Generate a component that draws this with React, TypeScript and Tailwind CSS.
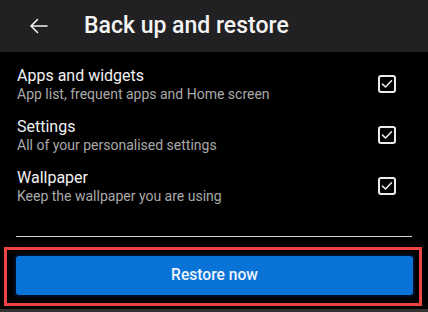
import React from "react";

const rows = [
  { title: "Apps and widgets", sub: "App list, frequent apps and Home screen" },
  { title: "Settings", sub: "All of your personalised settings" },
  { title: "Wallpaper", sub: "Keep the wallpaper you are using" },
];

function Check() {
  return (
    <div className="w-[18px] h-[18px] rounded-[3px] border-2 border-[#ececec] flex items-center justify-center">
      <svg width="12" height="10" viewBox="0 0 12 10" fill="none">
        <path d="M1.5 5.2 L4.5 8 L10.5 1.8" stroke="#ececec" strokeWidth="1.6" strokeLinecap="round" strokeLinejoin="round" />
      </svg>
    </div>
  );
}

export default function App() {
  return (
    <div className="w-[428px] h-[312px] bg-black flex flex-col overflow-hidden" style={{ fontFamily: "Roboto, 'Liberation Sans', sans-serif" }}>
      <div className="h-[52px] bg-[#212023] flex items-center shrink-0">
        <div className="ml-[29px] w-[19px] flex items-center">
          <svg width="19" height="16" viewBox="0 0 19 16" fill="none">
            <path d="M18 8 H2 M8.5 1.5 L2 8 L8.5 14.5" stroke="#f2f2f2" strokeWidth="1.6" strokeLinecap="round" strokeLinejoin="round" />
          </svg>
        </div>
        <div className="ml-[36px] text-[23px] leading-[28px] font-medium text-[#f4f4f4]">Back up and restore</div>
      </div>
      <div className="flex flex-col gap-[15px] pt-[14px] pl-[17px] pr-[32px]">
        {rows.map((r) => (
          <div key={r.title} className="flex items-center justify-between h-[36px]">
            <div className="flex flex-col">
              <div className="text-[16px] leading-[20px] text-[#f2f2f2]">{r.title}</div>
              <div className="text-[14px] leading-[16px] text-[#a9a9a9]">{r.sub}</div>
            </div>
            <Check />
          </div>
        ))}
      </div>
      <div className="mt-[32px] mx-[16px] h-px bg-[#d6d6d6]" />
      <div className="relative mt-[19px] ml-[16px] mr-[15px]">
        <div className="h-[39px] rounded-[3px] bg-[#0a73d7] shadow-[0_0_3px_2px_rgba(0,25,70,0.7)] flex items-center justify-center text-[15.6px] font-medium text-[#eef4fb]">
          Restore now
        </div>
        <div className="absolute left-[-12px] right-[-9px] top-[-9px] bottom-[-11px] border-[3px] border-[#ef4444]" />
      </div>
      <div className="mt-auto h-[3px] bg-[#333333]" />
    </div>
  );
}
